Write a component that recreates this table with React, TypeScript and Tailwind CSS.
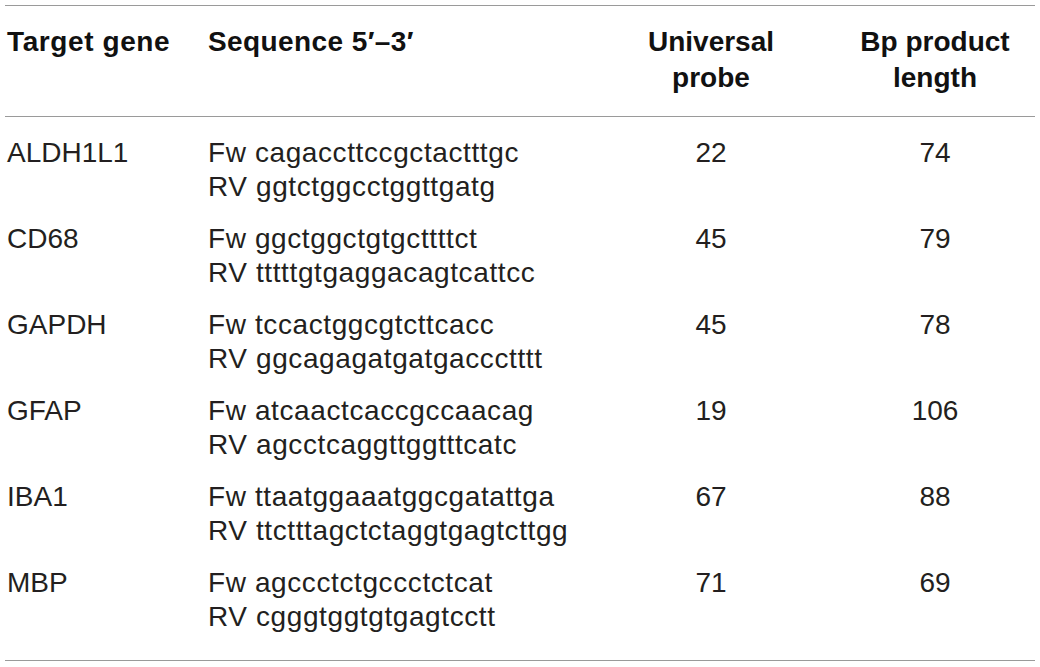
const rows = [
  { gene: "ALDH1L1", fw: "cagaccttccgctactttgc", rv: "ggtctggcctggttgatg", probe: "22", bp: "74" },
  { gene: "CD68", fw: "ggctggctgtgcttttct", rv: "tttttgtgaggacagtcattcc", probe: "45", bp: "79" },
  { gene: "GAPDH", fw: "tccactggcgtcttcacc", rv: "ggcagagatgatgaccctttt", probe: "45", bp: "78" },
  { gene: "GFAP", fw: "atcaactcaccgccaacag", rv: "agcctcaggttggtttcatc", probe: "19", bp: "106" },
  { gene: "IBA1", fw: "ttaatggaaatggcgatattga", rv: "ttctttagctctaggtgagtcttgg", probe: "67", bp: "88" },
  { gene: "MBP", fw: "agccctctgccctctcat", rv: "cgggtggtgtgagtcctt", probe: "71", bp: "69" }
];

const cols = "grid grid-cols-[201px_394px_222px_213px]";

export default function App() {
  return (
    <main className="h-[667px] w-[1040px] bg-white px-[5px] pt-[5px] font-['Liberation_Sans',Arial,sans-serif] text-[#231f20]">
      <div className="border-t border-b border-[#9a9a9a]">
        <div className={`${cols} border-b border-[#9a9a9a] pt-[18px] pb-[20px] text-[28px] leading-[36px] font-bold text-[#111]`}>
          <div className="pl-[2px] tracking-[0.6px]">Target gene</div>
          <div className="pl-[2px] tracking-[0.4px]">Sequence 5′–3′</div>
          <div className="text-center">
            Universal
            <br />
            probe
          </div>
          <div className="pl-[13px] text-center">
            Bp product
            <br />
            length
          </div>
        </div>

        <div className="flex flex-col gap-[18px] pt-[19px] pb-[26px] text-[28px] leading-[34px]">
          {rows.map((row) => (
            <div className={cols} key={row.gene}>
              <div className="pl-[2px]">{row.gene}</div>
              <div className="pl-[2px] tracking-[0.6px]">
                <div>Fw {row.fw}</div>
                <div>RV {row.rv}</div>
              </div>
              <div className="text-center">{row.probe}</div>
              <div className="pl-[13px] text-center">{row.bp}</div>
            </div>
          ))}
        </div>
      </div>
    </main>
  );
}
